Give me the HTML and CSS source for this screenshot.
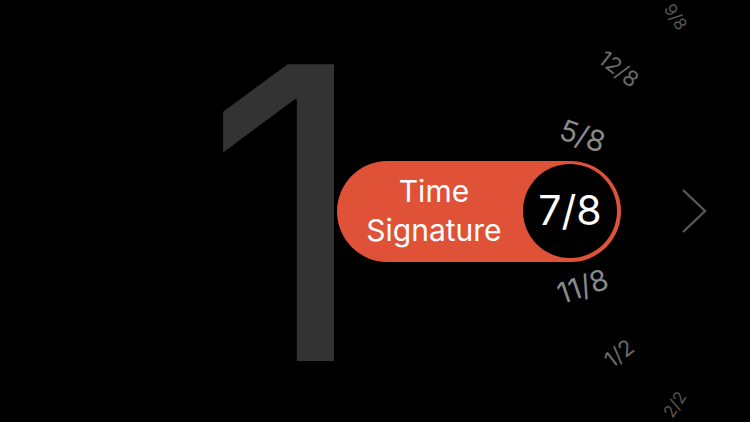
FILE: index.html
```html
<!DOCTYPE html>
<html lang="en">
<head>
<meta charset="utf-8">
<title>Time Signature</title>
<link rel="stylesheet" href="styles.css">
</head>
<body>
<main class="stage">
  <div class="beat">1</div>
  <div class="pill">
    <div class="pill-label">Time<br>Signature</div>
    <div class="selected">
      <span class="selected-value">7/8</span>
      <div class="wheel">
        <span class="tick near" style="--a: 19deg">5/8</span>
        <span class="tick mid" style="--a: 38deg">12/8</span>
        <span class="tick far" style="--a: 57deg">9/8</span>
        <span class="tick near" style="--a: -19deg">11/8</span>
        <span class="tick mid" style="--a: -38deg">1/2</span>
        <span class="tick far" style="--a: -57deg">2/2</span>
      </div>
    </div>
  </div>
  <svg class="chevron" width="26" height="46" viewBox="0 0 26 46" aria-hidden="true">
    <polyline points="2,2 24,23 2,44" fill="none" stroke="#565656" stroke-width="2.4"/>
  </svg>
</main>
</body>
</html>
```
FILE: styles.css
```css
html, body {
  margin: 0;
  padding: 0;
  background: #000;
  overflow: hidden;
}

body {
  width: 750px;
  height: 422px;
  font-family: Inter, "Noto Sans", sans-serif;
}

.stage {
  position: relative;
  display: flex;
  align-items: center;
  height: 422px;
  padding-left: 204px;
  box-sizing: border-box;
  overflow: hidden;
}

.beat {
  color: #333333;
  font-size: 408px;
  font-weight: 400;
  line-height: 1;
  height: 416px;
  margin-top: 4px;
  margin-right: -33px;
  display: flex;
  align-items: center;
}

.pill {
  position: relative;
  display: flex;
  align-items: center;
  width: 284px;
  height: 101px;
  box-sizing: border-box;
  padding-right: 4px;
  border-radius: 51px;
  background: #e05237;
}

.pill-label {
  flex: 1;
  text-align: center;
  color: #fff;
  font-size: 30px;
  line-height: 39px;
  padding-left: 8px;
}

.selected {
  position: relative;
  width: 94px;
  height: 94px;
  border-radius: 50%;
  background: #000;
  display: flex;
  align-items: center;
  justify-content: center;
}

.selected-value {
  color: #fff;
  font-size: 41px;
  line-height: 1;
  margin-top: -2px;
}

.wheel {
  position: absolute;
  left: calc(50% + 231px);
  top: 50%;
  width: 0;
  height: 0;
}

.tick {
  position: absolute;
  left: 0;
  top: 0;
  white-space: nowrap;
  line-height: 1;
  transform-origin: 0 0;
  transform: rotate(var(--a)) translateX(-231px) translate(-50%, -50%);
}

.tick.near {
  font-size: 29px;
  color: #8a8a8a;
}

.tick.mid {
  font-size: 22px;
  color: #6a6a6a;
}

.tick.far {
  font-size: 17px;
  color: #555555;
}

.chevron {
  margin-left: 60px;
}
```
